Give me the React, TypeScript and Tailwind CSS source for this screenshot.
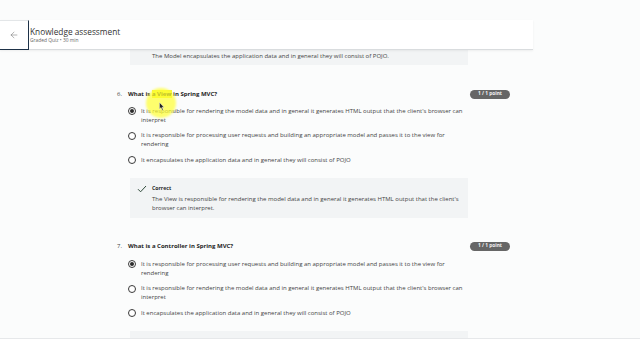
import React from "react";
import { ArrowLeft } from "lucide-react";

const font = { fontFamily: '"Open Sans", "Liberation Sans", sans-serif' };

function Radio({ checked }: { checked?: boolean }) {
  return (
    <span className="mt-[0.5px] flex h-[8px] w-[8px] shrink-0 items-center justify-center rounded-full border border-[#3a3a3a] bg-white">
      {checked && <span className="h-[4px] w-[4px] rounded-full bg-[#2b2b2b]" />}
    </span>
  );
}

function Option({ checked, text }: { checked?: boolean; text: string }) {
  return (
    <div className="flex gap-[5px]">
      <Radio checked={checked} />
      <p className="w-[326px] text-[6px] leading-[9px] text-[#444]">{text}</p>
    </div>
  );
}

function Badge() {
  return (
    <span className="flex h-[9px] w-[40px] items-center justify-center rounded-full bg-[#666] text-[4.8px] font-bold text-[#f2f2f2]">
      1 / 1 point
    </span>
  );
}

export default function App() {
  return (
    <div style={font} className="flex h-[360px] w-[640px] flex-col overflow-hidden bg-[#fbfcfc]">
      <div className="relative h-[338px] overflow-hidden">
        <div className="h-[20px]" />
        {/* Header */}
        <div className="relative z-10 flex h-[30px] w-[533px] bg-white shadow-[0_1px_2px_rgba(0,0,0,0.06)]">
          <div className="flex h-[30px] w-[29px] items-center justify-center border-b border-r border-t border-b-[#1e3248] border-r-[#1e3248] border-t-[#e3e6e8]">
            <ArrowLeft size={10} strokeWidth={1.2} color="#666" />
          </div>
          <div className="flex flex-1 flex-col justify-center border-b border-[#d9dcde] pl-[1px] pt-[1px]">
            <div className="text-[8.3px] leading-[10px] text-[#333]">Knowledge assessment</div>
            <div className="text-[4.9px] leading-[6px] text-[#666]">Graded Quiz • 30 min</div>
          </div>
        </div>

        <div className="ml-[117px] w-[393px]">
          {/* previous feedback box */}
          <div className="ml-[13px] h-[15px] w-[338px] bg-[#f2f4f5] pl-[22px] pt-[1.5px] text-[6px] leading-[9px] text-[#444]">
            The Model encapsulates the application data and in general they will consist of POJO.
          </div>

          {/* Question 6 */}
          <div className="mt-[24px] flex h-[10px] items-center">
            <span className="w-[11px] text-[6px] text-[#444]">6.</span>
            <span className="flex-1 text-[6px] font-bold text-[#1f1f1f]">
              What is <span className="bg-[#f5f53a]">a View</span> in Spring MVC?
            </span>
            <Badge />
          </div>
          <div className="ml-[11px] mt-[7.5px] flex flex-col gap-[6.5px]">
            <Option
              checked
              text="It is responsible for rendering the model data and in general it generates HTML output that the client's browser can interpret"
            />
            <Option text="It is responsible for processing user requests and building an appropriate model and passes it to the view for rendering" />
            <Option text="It encapsulates the application data and in general they will consist of POJO" />
          </div>
          <div className="ml-[13px] mt-[13.5px] flex w-[338px] gap-[5px] bg-[#f2f4f5] pb-[5.5px] pl-[7px] pt-[6px]">
            <svg width="10" height="8" viewBox="0 0 10 8" className="mt-[0.5px] shrink-0">
              <path d="M1 4.2 L3.6 6.8 L9 1" fill="none" stroke="#2f4a3a" strokeWidth="1" />
            </svg>
            <div>
              <div className="text-[5.2px] font-bold leading-[8px] text-[#2b2b2b]">Correct</div>
              <p className="mt-[2.5px] w-[310px] text-[6px] leading-[9px] text-[#444]">
                The View is responsible for rendering the model data and in general it generates HTML output that the client's browser can interpret.
              </p>
            </div>
          </div>

          {/* Question 7 */}
          <div className="mt-[23px] flex h-[10px] items-center">
            <span className="w-[11px] text-[6px] text-[#444]">7.</span>
            <span className="flex-1 text-[6px] font-bold text-[#1f1f1f]">What is a Controller in Spring MVC?</span>
            <Badge />
          </div>
          <div className="ml-[11px] mt-[8.5px] flex flex-col gap-[6.5px]">
            <Option
              checked
              text="It is responsible for processing user requests and building an appropriate model and passes it to the view for rendering"
            />
            <Option text="It is responsible for rendering the model data and in general it generates HTML output that the client's browser can interpret" />
            <Option text="It encapsulates the application data and in general they will consist of POJO" />
          </div>
          <div className="ml-[13px] mt-[13.5px] h-[40px] w-[338px] bg-[#f2f4f5]" />
        </div>

        {/* cursor highlight */}
        <div className="pointer-events-none absolute left-[146px] top-[88px] h-[30px] w-[30px] rounded-full bg-[#ffff30]/70 blur-[1px]" />
        <svg className="pointer-events-none absolute left-[159px] top-[102px]" width="6" height="9" viewBox="0 0 6 9">
          <path d="M0.5 0.5 L0.5 7 L2 5.6 L3.2 8.2 L4.2 7.7 L3 5.2 L5 5.2 Z" fill="#222" stroke="#fff" strokeWidth="0.4" />
        </svg>
      </div>
      <div className="h-[22px] border-t border-[#e6e8ea] bg-white" />
    </div>
  );
}
